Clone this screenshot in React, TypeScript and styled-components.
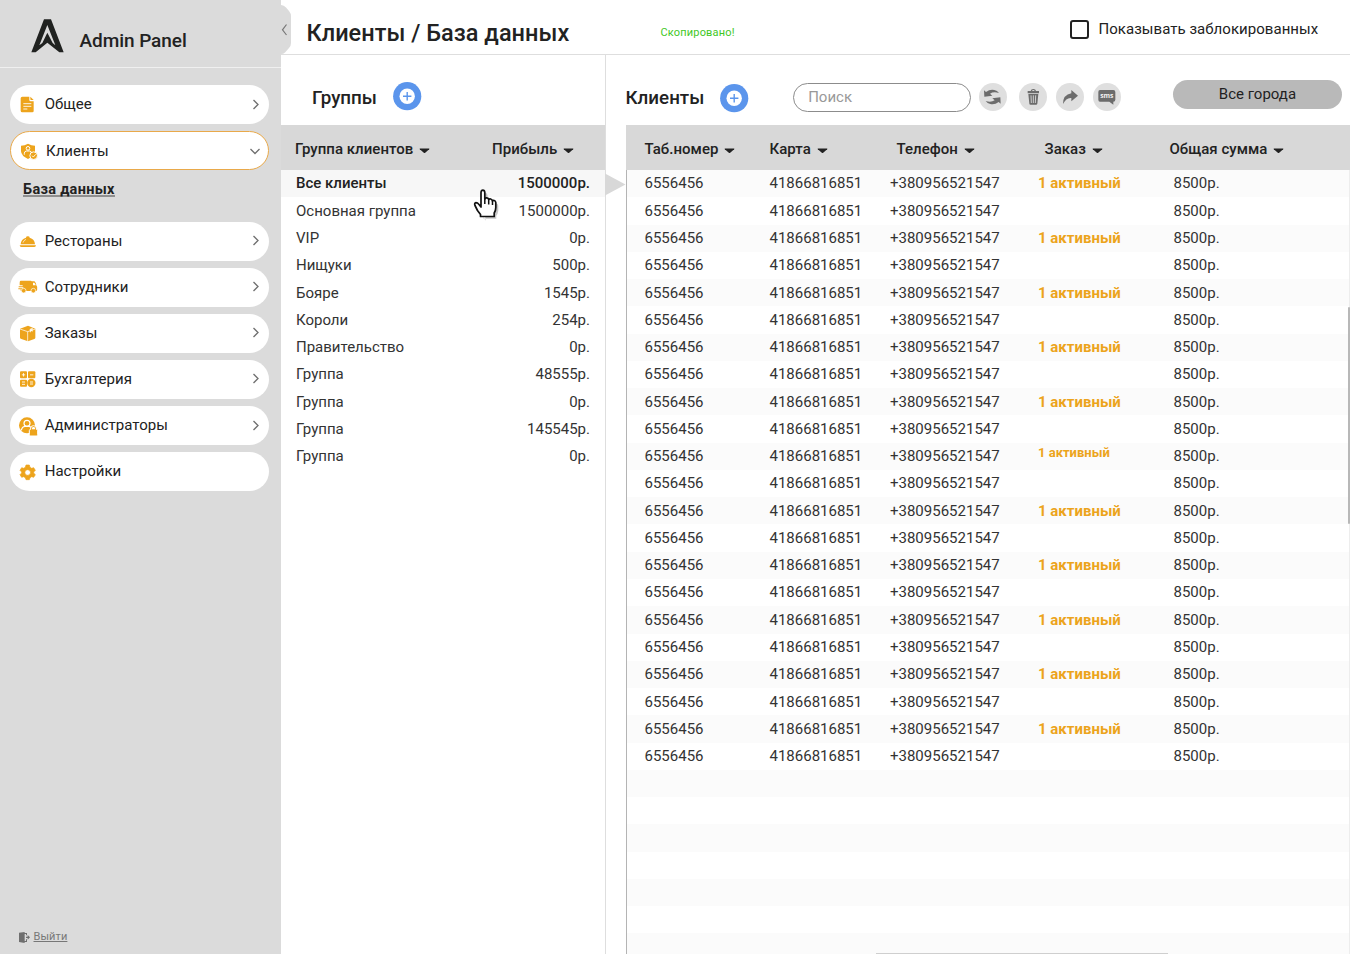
import React from 'react';
import styled, { createGlobalStyle } from 'styled-components';

const Global = createGlobalStyle`
  * { box-sizing: border-box; }
  body { margin: 0; background: #fff; color: #222; font-family: Roboto, "Liberation Sans", sans-serif; font-size: 15px; overflow: hidden; }
  svg { display: block; flex: none; }
`;

const Page = styled.div`
  display: flex;
  width: 1350px;
  height: 954px;
  overflow: hidden;
`;

const Sidebar = styled.aside`
  width: 281px;
  flex: none;
  background: #dbdbdb;
  display: flex;
  flex-direction: column;
`;

const Brand = styled.div`
  height: 68px;
  flex: none;
  display: flex;
  align-items: flex-start;
  gap: 15.5px;
  padding: 19px 0 0 31px;
  border-bottom: 1px solid #f0f0f0;
`;

const BrandName = styled.span`
  font-size: 19px;
  font-weight: 500;
  line-height: 22px;
  margin-top: 11px;
  letter-spacing: -0.06px;
`;

const Menu = styled.nav`
  flex: 1;
  display: flex;
  flex-direction: column;
  gap: 6.7px;
  padding: 17px 12px 0 10px;
`;

const MenuItem = styled.button<{ $active?: boolean }>`
  display: flex;
  align-items: center;
  width: 259px;
  height: 39.4px;
  flex: none;
  padding: 0 7px 0 8px;
  border: ${p => (p.$active ? '1px solid #e9a94a' : '0')};
  border-radius: 20px;
  background: #fff;
  color: #222;
  font: 400 15px/20px Roboto, sans-serif;
  text-align: left;
`;

const MenuLabel = styled.span<{ $active?: boolean }>`
  flex: 1;
  margin-left: ${p => (p.$active ? 7 : 6.7)}px;
  padding-bottom: ${p => (p.$active ? 0 : 1)}px;
  padding-top: ${p => (p.$active ? 1 : 0)}px;
  letter-spacing: 0.02px;
`;

const SubItem = styled.a`
  font-size: 14.5px;
  font-weight: 700;
  line-height: 18px;
  letter-spacing: 0.3px;
  align-self: flex-start;
  margin: 4px 0 17.7px 13px;
  border-bottom: 2px solid #8f8f8f;
  height: 16px;
`;

const Logout = styled.a`
  display: flex;
  align-items: center;
  gap: 3.5px;
  margin: 0 0 10px 19px;
  font-size: 11px;
  line-height: 14px;
  letter-spacing: 0.1px;
  color: #777;
  text-decoration: underline;
`;

const Main = styled.main`
  flex: 1;
  display: flex;
  flex-direction: column;
  min-width: 0;
`;

const TopBar = styled.header`
  position: relative;
  display: flex;
  align-items: flex-start;
  height: 55px;
  flex: none;
  padding-left: 25.5px;
  border-bottom: 1px solid #dedede;
`;

const CollapseTab = styled.div`
  position: absolute;
  left: 0;
  top: 4px;
`;

const Title = styled.h1`
  margin: 19px 0 0;
  width: 354px;
  font-size: 23.5px;
  line-height: 28px;
  font-weight: 500;
  letter-spacing: 0.03px;
  white-space: nowrap;
`;

const Copied = styled.span`
  margin-top: 26px;
  width: 409.5px;
  font-size: 11px;
  line-height: 14px;
  letter-spacing: 0.17px;
  color: #3fc81f;
`;

const CheckLabel = styled.label`
  display: flex;
  align-items: center;
  gap: 9.5px;
  margin-top: 20px;
  line-height: 19px;
  letter-spacing: 0.04px;
  white-space: nowrap;
`;

const CheckBox = styled.span`
  width: 19px;
  height: 19px;
  border: 2px solid #222;
  border-radius: 3px;
`;

const Panels = styled.div`
  flex: 1;
  display: flex;
  min-height: 0;
`;

const GroupsPanel = styled.section`
  position: relative;
  width: 325px;
  flex: none;
  border-right: 1px solid #dedede;
`;

const ClientsPanel = styled.section`
  position: relative;
  flex: 1;
  margin-left: 20px;
  min-width: 0;
`;

const PanelBar = styled.div`
  display: flex;
  align-items: flex-start;
  height: 70.4px;
`;

const PanelTitle = styled.h2<{ $w: number; $left: number }>`
  margin: 32px 0 0 ${p => p.$left}px;
  width: ${p => p.$w}px;
  font-size: 18.8px;
  line-height: 22px;
  font-weight: 500;
`;

const AddButton = styled.button<{ $top: number }>`
  display: block;
  margin: ${p => p.$top}px 0 0;
  padding: 0;
  border: 0;
  background: none;
`;

const Search = styled.input`
  width: 178.5px;
  height: 28.5px;
  margin: 28px 8px 0 43.8px;
  padding: 0 14.2px;
  border: 1px solid #8c8c8c;
  border-radius: 15px;
  background: #fff;
  font: 400 15px Roboto, sans-serif;
  &::placeholder { color: #999; }
`;

const Tools = styled.div`
  display: flex;
  gap: 8.7px;
  margin-top: 28px;
  & > :first-child { margin-right: 3px; }
`;

const ToolButton = styled.button`
  width: 28px;
  height: 28px;
  padding: 0;
  border: 0;
  border-radius: 50%;
  background: #dfdfdf;
`;

const CityButton = styled.button`
  width: 169px;
  height: 28.5px;
  margin: 25px 0 0 52.4px;
  padding: 0 0 1px;
  border: 0;
  border-radius: 15px;
  background: #b9b9b9;
  color: #222;
  font: 400 15px Roboto, sans-serif;
`;

const GroupHead = styled.div`
  display: grid;
  grid-template-columns: 197px 1fr;
  align-items: center;
  height: 44.6px;
  padding: 2px 0 0 14px;
  background: #d8d8d8;
`;

const HeadCell = styled.div`
  display: flex;
  align-items: center;
  gap: 5.8px;
  font-weight: 500;
  font-size: 15px;
  line-height: 20px;
  letter-spacing: 0.03px;
  white-space: nowrap;
  svg { margin-top: 4px; }
`;

const GroupRow = styled.div<{ $selected?: boolean }>`
  display: flex;
  justify-content: space-between;
  height: 27.28px;
  line-height: 27px;
  padding: 0.5px 15px 0;
  color: ${p => (p.$selected ? '#222' : '#333')};
  font-weight: ${p => (p.$selected ? 500 : 400)};
  background: ${p => (p.$selected ? '#f7f7f7' : '#fff')};
`;

const ClientHead = styled.div`
  display: grid;
  grid-template-columns: 125px 127px 148px 125px 1fr;
  align-items: center;
  height: 44.6px;
  padding: 2px 0 0 18.5px;
  background: #d8d8d8;
`;

const ClientRow = styled.div`
  display: grid;
  grid-template-columns: 125px 120.5px 148px 135.5px 1fr;
  height: 27.28px;
  line-height: 27px;
  padding: 0.5px 0 0 17.5px;
  color: #333;
  border-left: 1px solid #b4b4b4;
  border-right: 1px solid #ededed;
  background: #fff;
  &:nth-child(odd) { background: #fbfbfb; }
`;

const Rows = styled.div`
  height: 784px;
  overflow: hidden;
`;

const Order = styled.span<{ $small?: boolean }>`
  color: #eca41c;
  font-weight: 700;
  font-size: ${p => (p.$small ? 13 : 15)}px;
  line-height: ${p => (p.$small ? 20 : 27)}px;
`;

const Pointer = styled.div`
  position: absolute;
  left: 324px;
  top: 118px;
`;

const Cursor = styled.div`
  position: absolute;
  left: 191px;
  top: 133px;
`;

const VThumb = styled.div`
  position: absolute;
  right: 0;
  top: 252px;
  width: 2px;
  height: 217px;
  border-radius: 1px;
  background: #b8b8b8;
`;

const HThumb = styled.div`
  position: absolute;
  left: 250px;
  bottom: 0;
  width: 292px;
  height: 1px;
  background: #cfcfcf;
`;

const ORANGE = '#eda41c';

const Icon = ({ children }: { children: React.ReactNode }) => (
  <svg width="20" height="20" viewBox="0 0 60 60" fill={ORANGE}>{children}</svg>
);

const icons = {
  doc: (
    <Icon>
      <path d="M13 5h21v10q0 4 4 4h9v29q0 4-4 4H13q-5 0-5-5V10q0-5 5-5zM37 5l10 10h-8q-2 0-2-2z" />
      <path d="M16 26h24M16 34h24M16 42h12" stroke="#fff" strokeWidth="2.6" />
    </Icon>
  ),
  shield: (
    <Icon>
      <path d="M27 8q10 6 21 6v17q-1 14-21 23Q7 45 6 31V14q11 0 21-6z" />
      <circle cx="27" cy="22" r="5.5" fill="none" stroke="#fff" strokeWidth="3" />
      <path d="M16 41v-4q0-6 6-7h10q6 1 6 7v2" fill="none" stroke="#fff" strokeWidth="3" />
      <circle cx="44" cy="44" r="11.5" stroke="#fff" strokeWidth="3" />
      <path d="M39 44l4 4 7-8" fill="none" stroke="#fff" strokeWidth="2.6" />
    </Icon>
  ),
  bell: (
    <Icon>
      <path d="M8 40q1-16 16-20a5 4 0 1 1 11 0q15 4 16 20zM5 42.5h49q-1 5.500-6 5.500H11q-5 0-6-5.500z" />
      <path d="M15 35q2-7 9-10" fill="none" stroke="#fff" strokeWidth="2" />
    </Icon>
  ),
  truck: (
    <Icon>
      <path d="M8 11h30q3 0 3 3v28H8v-5H1v-3h15v-3H2v-3h12v-3H5v-8q0-6 3-6zM40.500 13h9q6 6 6 13 2 1 2 4v8q0 4-4 4h-13z" />
      <path d="M45 17h4q4 4 4 8h-8z" fill="#fff" />
      <circle cx="17" cy="41" r="7" stroke="#fff" strokeWidth="2" />
      <circle cx="46" cy="41" r="7" stroke="#fff" strokeWidth="2" />
    </Icon>
  ),
  box: (
    <Icon>
      <path d="M30 8l22 9v27q0 3-3 4L30 55 10 48q-4-1-4-4V17z" />
      <path d="M6 18l23 8 23-8M29 26v30" fill="none" stroke="#fff" strokeWidth="2.200" />
      <path d="M35 18l9-4v12l-4-2-4 5z" fill="#fff" opacity=".85" />
    </Icon>
  ),
  calc: (
    <Icon>
      <rect x="6" y="7" width="21" height="21" rx="3" />
      <rect x="30" y="7" width="22" height="21" rx="3" />
      <rect x="6" y="32" width="21" height="21" rx="3" />
      <circle cx="40" cy="42" r="12.500" />
      <path d="M11.500 17.500h10M16.500 12.500v10M36 17.500h10M12 39h9M12 46h9M36 39h9M36 45h9" stroke="#fff" strokeWidth="2.600" />
    </Icon>
  ),
  admin: (
    <Icon>
      <circle cx="27" cy="28" r="24" />
      <circle cx="27" cy="22" r="9" fill="none" stroke="#fff" strokeWidth="3.500" />
      <path d="M10 43q2-11 11-12h12q6 1 8 6" fill="none" stroke="#fff" strokeWidth="3.500" />
      <path d="M38 40v-4q1-7 8.500-7t8.500 7v4q4 0 4 4v12q0 4-4 4H38q-4 0-4-4V44q0-4 4-4z" stroke="#fff" strokeWidth="3" />
      <path d="M42 40v-3q0-4 4.500-4t4.500 4v3z" fill="#fff" />
    </Icon>
  ),
  gear: (
    <Icon>
      <path
        fillRule="evenodd"
        strokeLinejoin="round"
        stroke={ORANGE}
        strokeWidth="2"
        d="M24 9h10l2 7 5 3 6-2 5 8-5 5v3l5 5-5 8-6-2-5 3-2 6H24l-2-6-5-3-6 2-5-8 5-5v-3l-5-5 5-8 6 2 5-3zM29 23a8.500 8.500 0 1 0 0 17 8.500 8.500 0 0 0 0-17z"
      />
    </Icon>
  ),
};

const Chevron = ({ down }: { down?: boolean }) => (
  <svg width="12" height="12" viewBox="0 0 12 12" fill="none" stroke="#6f6f6f" strokeWidth="1.3">
    {down ? <path d="M1.500 4l4.500 4.500L10.500 4" /> : <path d="M3.500 1L8 5.500l-4.500 4.500" />}
  </svg>
);

const Caret = () => (
  <svg width="11" height="6" viewBox="0 0 11 6">
    <path d="M1 .5h9q.7.2.2.8L6.200 4.800q-.7.600-1.400 0L.800 1.300Q.300.700 1 .5z" fill="#222" />
  </svg>
);

const Plus = () => (
  <svg width="29" height="29" viewBox="0 0 29 29">
    <circle cx="14.2" cy="14.2" r="14.100" fill="#5b95ec" />
    <circle cx="14.2" cy="14.2" r="7.700" fill="#fff" />
    <path d="M10 14.200h8.400M14.200 10v8.400" stroke="#5b95ec" strokeWidth="1.400" />
  </svg>
);

const ToolIcon = ({ children }: { children: React.ReactNode }) => (
  <svg width="28" height="28" viewBox="0 0 84 84" fill="#6c6c6c">{children}</svg>
);

const RefreshArrow = 'M15 22L21 27Q33 18 46 21Q55 23 60 30Q44 25 33 32L40 38L16 41Z';

const HeadLabel = ({ children }: { children: string }) => (
  <HeadCell>{children}<Caret /></HeadCell>
);

const menuItems: [keyof typeof icons, string][] = [
  ['bell', 'Рестораны'],
  ['truck', 'Сотрудники'],
  ['box', 'Заказы'],
  ['calc', 'Бухгалтерия'],
  ['admin', 'Администраторы'],
  ['gear', 'Настройки'],
];

const groups = [
  ['Все клиенты', '1500000р.'],
  ['Основная группа', '1500000р.'],
  ['VIP', '0р.'],
  ['Нищуки', '500р.'],
  ['Бояре', '1545р.'],
  ['Короли', '254р.'],
  ['Правительство', '0р.'],
  ['Группа', '48555р.'],
  ['Группа', '0р.'],
  ['Группа', '145545р.'],
  ['Группа', '0р.'],
];

const CLIENT_COUNT = 22;
const ROW_COUNT = 29;

export default function App() {
  return (
    <Page>
      <Global />
      <Sidebar>
        <Brand>
          <svg width="33" height="34" viewBox="0 0 99 102" fill="#202220">
            <path fillRule="evenodd" d="M39 1h21l38 99H85L49 71 14 100H1zM49 18L25 79l9-7 15-31 16 31 8 7z" />
          </svg>
          <BrandName>Admin Panel</BrandName>
        </Brand>
        <Menu>
          <MenuItem>{icons.doc}<MenuLabel>Общее</MenuLabel><Chevron /></MenuItem>
          <MenuItem $active>{icons.shield}<MenuLabel $active>Клиенты</MenuLabel><Chevron down /></MenuItem>
          <SubItem>База данных</SubItem>
          {menuItems.map(([icon, label]) => (
            <MenuItem key={label}>
              {icons[icon]}
              <MenuLabel>{label}</MenuLabel>
              {icon !== 'gear' && <Chevron />}
            </MenuItem>
          ))}
        </Menu>
        <Logout>
          <svg width="11" height="11" viewBox="0 0 33 33" fill="#6f6f6f">
            <path d="M0 2l17-2v33L0 30zM17 3h7v7h-3V6h-4zM17 27h4v-5h3v8h-7zM21 14h5V9l7 7-7 7v-5h-5z" />
          </svg>
          Выйти
        </Logout>
      </Sidebar>
      <Main>
        <TopBar>
          <CollapseTab>
            <svg width="11" height="51" viewBox="0 0 11 51">
              <path d="M0 1q3 0 5 2.500l3 3.500q2 2.500 2 5v27q0 3-2 5l-4 4.500Q2.500 50 0 50z" fill="#dbdbdb" />
              <path d="M5.500 20.500L1.500 25.800l4 5.200" fill="none" stroke="#777" strokeWidth="1.200" />
            </svg>
          </CollapseTab>
          <Title>Клиенты / База данных</Title>
          <Copied>Скопировано!</Copied>
          <CheckLabel><CheckBox />Показывать заблокированных</CheckLabel>
        </TopBar>
        <Panels>
          <GroupsPanel>
            <PanelBar>
              <PanelTitle $left={31} $w={81}>Группы</PanelTitle>
              <AddButton $top={27}><Plus /></AddButton>
            </PanelBar>
            <GroupHead>
              <HeadLabel>Группа клиентов</HeadLabel>
              <HeadLabel>Прибыль</HeadLabel>
            </GroupHead>
            {groups.map(([name, sum], i) => (
              <GroupRow key={i} $selected={i === 0}><span>{name}</span><span>{sum}</span></GroupRow>
            ))}
            <Pointer>
              <svg width="21" height="23" viewBox="0 0 21 23"><path d="M0 0.500L20.500 11.500 0 22.500z" fill="#d8d8d8" /></svg>
            </Pointer>
            <Cursor>
              <svg width="30" height="34" viewBox="0 0 30 34">
                <path
                  d="M12 31L12 28 8 22Q3.500 18 3.500 16.500 4.500 14 7 15.500L10 18.500V5.500Q10.200 3.200 12 3.200T14 5.500V11.500Q17 10.500 18 12.500 20.500 11.500 21.500 13.800 24.500 13 24.800 16V21Q24.500 24 22.800 26V29H10V27"
                  fill="#000" opacity=".22" transform="translate(1.500 1.800)"
                />
                <path
                  d="M8.500 28.500V26.500L5.500 22.500 3 17.500Q2 15 4 14.700 5.500 14.700 7 16.500L9 19V4.500Q9.200 2.200 10.900 2.200T12.800 4.500V11Q13 9.700 14.800 9.900T16.700 11.700Q17.200 10.700 18.700 11T20.500 13Q21 12.200 22.300 12.500T23.800 14.500V19.500Q23.800 22.500 22.200 25V28.500z"
                  fill="#fff" stroke="#111" strokeWidth="1.700" strokeLinejoin="round"
                />
                <path d="M12.800 10v6M16.700 11.500v5M20.500 12.500v4.500" stroke="#111" strokeWidth="1.500" />
              </svg>
            </Cursor>
          </GroupsPanel>
          <ClientsPanel>
            <PanelBar>
              <PanelTitle $left={-0.5} $w={94.7}>Клиенты</PanelTitle>
              <AddButton $top={29}><Plus /></AddButton>
              <Search placeholder="Поиск" />
              <Tools>
                <ToolButton>
                  <ToolIcon>
                    <path d={RefreshArrow} />
                    <path d={RefreshArrow} transform="rotate(180 40 42)" />
                  </ToolIcon>
                </ToolButton>
                <ToolButton>
                  <ToolIcon>
                    <path d="M26 24h9q1-6 8-6t8 6h9v7H26zM39 24h8q-1-3-4-3t-4 3z" fillRule="evenodd" />
                    <path d="M28 33h30l-3 29q0 3-4 3H35q-4 0-4-3z" />
                    <path d="M36 37l1 23M43 37v23M50 37l-1 23" stroke="#dfdfdf" strokeWidth="2.600" />
                  </ToolIcon>
                </ToolButton>
                <ToolButton>
                  <ToolIcon>
                    <path d="M46 21l20 17-20 17v-10q-15-2-25 18 0-28 25-32z" />
                  </ToolIcon>
                </ToolButton>
                <ToolButton>
                  <ToolIcon>
                    <path d="M21 21h40q6 0 6 6v23q0 6-6 6v9l-12-9H21q-5 0-5-6V27q0-6 5-6z" />
                    <text x="41.500" y="44" textAnchor="middle" fontFamily="Open Sans, sans-serif" fontSize="20" fontWeight="700" fill="#f2f2f2">sms</text>
                  </ToolIcon>
                </ToolButton>
              </Tools>
              <CityButton>Все города</CityButton>
            </PanelBar>
            <ClientHead>
              <HeadLabel>Таб.номер</HeadLabel>
              <HeadLabel>Карта</HeadLabel>
              <HeadLabel>Телефон</HeadLabel>
              <HeadLabel>Заказ</HeadLabel>
              <HeadLabel>Общая сумма</HeadLabel>
            </ClientHead>
            <Rows>
              {Array.from({ length: ROW_COUNT }, (_, i) => (
                <ClientRow key={i}>
                  {i < CLIENT_COUNT && (
                    <>
                      <span>6556456</span>
                      <span>41866816851</span>
                      <span>+380956521547</span>
                      <Order $small={i === 10}>{i % 2 === 0 ? '1 активный' : ''}</Order>
                      <span>8500р.</span>
                    </>
                  )}
                </ClientRow>
              ))}
            </Rows>
            <VThumb />
            <HThumb />
          </ClientsPanel>
        </Panels>
      </Main>
    </Page>
  );
}
